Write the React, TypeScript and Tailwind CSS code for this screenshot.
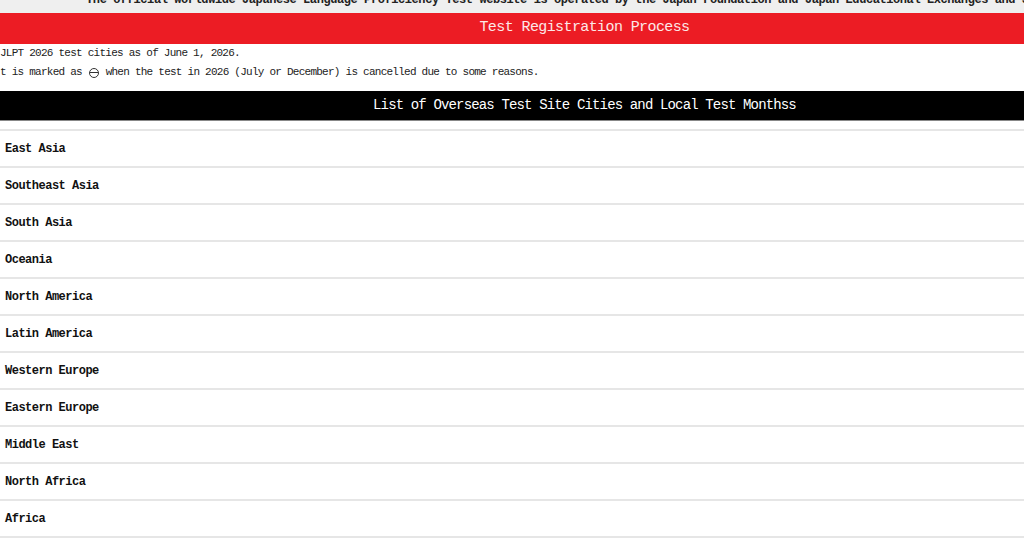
import React from "react";

const regions = [
  "East Asia",
  "Southeast Asia",
  "South Asia",
  "Oceania",
  "North America",
  "Latin America",
  "Western Europe",
  "Eastern Europe",
  "Middle East",
  "North Africa",
  "Africa",
];

const mono = { fontFamily: '"Liberation Mono", "DejaVu Sans Mono", monospace' };

export default function App() {
  return (
    <div className="w-[1024px] h-[544px] overflow-hidden bg-white" style={mono}>
      <div className="w-[1169px]">
        <div className="h-[13px] overflow-hidden bg-[#efefef]">
          <div className="mt-[-7px] text-center text-[12px] leading-[14px] font-bold tracking-[-0.42px] text-[#222] whitespace-nowrap">
            The official worldwide Japanese Language Proficiency Test website is operated by the Japan Foundation and Japan Educational Exchanges and Services.
          </div>
        </div>
        <div className="h-[31px] bg-[#ec1c24] flex items-center justify-center">
          <span className="text-[15px] tracking-[-0.6px] text-[#fde8e8]">Test Registration Process</span>
        </div>
        <div className="text-[11px] tracking-[-0.75px] text-[#222] leading-[19px] whitespace-nowrap">
          <div>JLPT 2026 test cities as of June 1, 2026.</div>
          <div className="flex items-center">
            <span>t is marked as&nbsp;</span>
            <span className="inline-block w-[10px] h-[10px] rounded-full border border-[#333] relative mx-[1px]">
              <span className="absolute left-0 right-0 top-[3.5px] h-px bg-[#333]" />
            </span>
            <span>&nbsp;when the test in 2026 (July or December) is cancelled due to some reasons.</span>
          </div>
        </div>
        <div className="mt-[9px] h-[30px] bg-black flex items-center justify-center border-b border-[#888]">
          <span className="text-[14px] tracking-[-0.85px] text-white">List of Overseas Test Site Cities and Local Test Monthss</span>
        </div>
        <div className="mt-[8px]">
          {regions.map((r) => (
            <div key={r} className="border-t-2 border-[#e6e6e6] h-[37px] flex items-center pl-[5px]">
              <span className="text-[12px] font-bold tracking-[-0.5px] text-[#111]">{r}</span>
            </div>
          ))}
          <div className="border-t-2 border-[#e6e6e6]" />
        </div>
      </div>
    </div>
  );
}
